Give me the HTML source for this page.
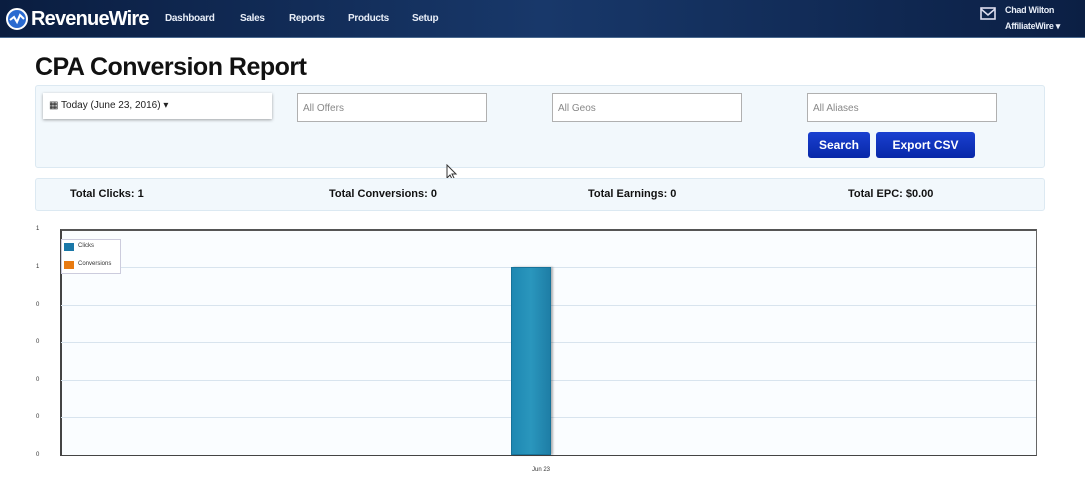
<!DOCTYPE html>
<html><head><style>
*{box-sizing:border-box;margin:0;padding:0}
body{width:1085px;height:488px;background:#fff;font-family:"Liberation Sans",Arial,sans-serif;position:relative;overflow:hidden}
.nav{position:absolute;left:0;top:0;width:1085px;height:38px;background:linear-gradient(90deg,#0a1d40 0%,#18386a 50%,#0b1f44 100%);border-bottom:1px solid #4a6a90}
.a{position:absolute;font-size:10px;font-weight:bold;color:#e8eef8;letter-spacing:-0.3px}
.abs{position:absolute}
.inp{position:absolute;height:29px;border:1px solid #b0b0b0;background:#fff;font-size:10px;color:#888;padding:9px 5px}
.btn{position:absolute;height:26px;background:linear-gradient(#1a40d0,#0828a8);color:#fff;font-size:12px;font-weight:bold;text-align:center;line-height:26px;border-radius:3px}
.tot{position:absolute;top:188px;font-size:11px;font-weight:bold;color:#111}
.grid{position:absolute;left:61px;width:975px;height:1px;background:#d8e4ee}
.yl{position:absolute;left:36px;font-size:6px;color:#333}
</style></head><body>
<div class="nav">
 <svg class="abs" style="left:6px;top:8px" width="22" height="22" viewBox="0 0 22 22"><circle cx="11" cy="11" r="10" fill="#2a6ad0" stroke="#fff" stroke-width="2"/><path d="M4 12 L8 9 L11 14 L14 7 L18 11" stroke="#fff" stroke-width="2" fill="none"/></svg>
 <div class="abs" style="left:31px;top:8px;font-size:20px;font-weight:bold;color:#fff;letter-spacing:-0.8px">RevenueWire</div>
 <div class="a" style="left:165px;top:13px">Dashboard</div>
 <div class="a" style="left:240px;top:13px">Sales</div>
 <div class="a" style="left:289px;top:13px">Reports</div>
 <div class="a" style="left:348px;top:13px">Products</div>
 <div class="a" style="left:412px;top:13px">Setup</div>
 <svg class="abs" style="left:980px;top:7px" width="16" height="13" viewBox="0 0 16 13"><rect x="1" y="1" width="14" height="11" fill="none" stroke="#dde" stroke-width="1.6"/><path d="M1 2 L8 8 L15 2" stroke="#dde" stroke-width="1.6" fill="none"/></svg>
 <div class="a" style="left:1005px;top:5px;font-size:9px">Chad Wilton</div>
 <div class="a" style="left:1005px;top:21px;font-size:9px">AffiliateWire ▾</div>
</div>
<div class="abs" style="left:35px;top:53px;font-size:25px;font-weight:bold;color:#111;letter-spacing:-0.5px">CPA Conversion Report</div>
<div class="abs" style="left:35px;top:85px;width:1010px;height:83px;background:#f2f8fc;border:1px solid #dce9f2;border-radius:3px"></div>
<div class="abs" style="left:43px;top:93px;width:229px;height:26px;background:#fff;box-shadow:0 1px 3px rgba(0,0,0,.35);font-size:10px;color:#222;padding:7px 6px">▦ Today (June 23, 2016) ▾</div>
<div class="inp" style="left:297px;top:93px;width:190px">All Offers</div>
<div class="inp" style="left:552px;top:93px;width:190px">All Geos</div>
<div class="inp" style="left:807px;top:93px;width:190px">All Aliases</div>
<div class="btn" style="left:808px;top:132px;width:62px">Search</div>
<div class="btn" style="left:876px;top:132px;width:99px">Export CSV</div>
<svg class="abs" style="left:446px;top:164px" width="12" height="18" viewBox="0 0 12 18"><path d="M1 1 L1 14 L4 11 L7 17 L9 16 L6 10 L10 10 Z" fill="#fff" stroke="#333" stroke-width="1"/></svg>
<div class="abs" style="left:35px;top:178px;width:1010px;height:33px;background:#f2f8fc;border:1px solid #dce9f2;border-radius:3px"></div>
<div class="tot" style="left:70px">Total Clicks: 1</div>
<div class="tot" style="left:329px">Total Conversions: 0</div>
<div class="tot" style="left:588px">Total Earnings: 0</div>
<div class="tot" style="left:848px">Total EPC: $0.00</div>
<div class="abs" style="left:60px;top:229px;width:977px;height:227px;background:#fafdff;border-left:2px solid #444;border-top:2px solid #555;border-right:1px solid #666;border-bottom:1px solid #444"></div>
<div class="grid" style="top:267px"></div><div class="grid" style="top:305px"></div><div class="grid" style="top:342px"></div><div class="grid" style="top:380px"></div><div class="grid" style="top:417px"></div>
<div class="yl" style="top:226px">1</div><div class="yl" style="top:264px">1</div><div class="yl" style="top:302px">0</div><div class="yl" style="top:339px">0</div><div class="yl" style="top:377px">0</div><div class="yl" style="top:414px">0</div><div class="yl" style="top:452px">0</div>
<div class="abs" style="left:61px;top:239px;width:60px;height:35px;background:#fff;border:1px solid #ccd"></div>
<div class="abs" style="left:64px;top:243px;width:10px;height:8px;background:#1a78a8"></div>
<div class="abs" style="left:78px;top:243px;font-size:6px;color:#333">Clicks</div>
<div class="abs" style="left:64px;top:261px;width:10px;height:8px;background:#e87a10"></div>
<div class="abs" style="left:78px;top:261px;font-size:6px;color:#333">Conversions</div>
<div class="abs" style="left:511px;top:267px;width:40px;height:188px;background:linear-gradient(90deg,#1e88b2,#2a96bd 50%,#1e7ea6);border:1px solid #17739a;box-shadow:2px 0 2px rgba(0,0,0,.3)"></div>
<div class="abs" style="left:532px;top:467px;font-size:6px;color:#333">Jun 23</div>
</body></html>
